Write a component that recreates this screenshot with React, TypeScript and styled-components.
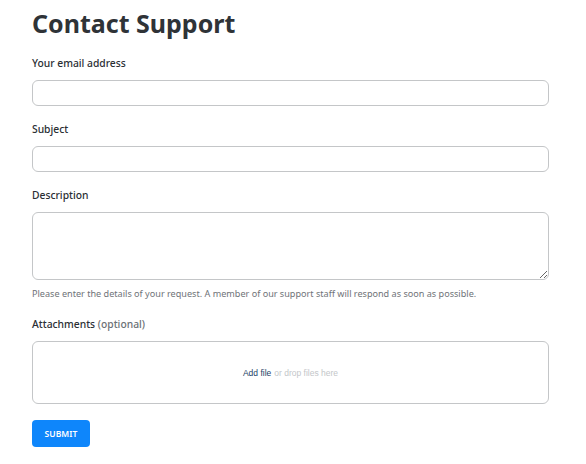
import React from "react";
import styled, { createGlobalStyle } from "styled-components";

const GlobalStyle = createGlobalStyle`
  html, body {
    margin: 0;
    padding: 0;
    background: #ffffff;
  }
  body {
    font-family: "Noto Sans", "Open Sans", sans-serif;
    color: #2f3337;
  }
`;

const Page = styled.main`
  padding: 5px 37px 0 32px;
  display: flex;
  flex-direction: column;
`;

const Title = styled.h1`
  margin: 0 0 14px;
  font-size: 25px;
  line-height: 36px;
  font-weight: 700;
  color: #2f3337;
`;

const Field = styled.div`
  display: flex;
  flex-direction: column;
  margin-bottom: ${(p: { gap?: number }) => (p.gap ?? 15)}px;
`;

const Label = styled.label`
  font-size: 10.3px;
  line-height: 16px;
  font-weight: 500;
  color: #2a2e33;
  margin-bottom: 9px;
`;

const Muted = styled.span`
  color: #6b7075;
`;

const Input = styled.input`
  box-sizing: border-box;
  height: 26px;
  width: 100%;
  border: 1px solid #c4c6c8;
  border-radius: 6px;
  background: #fff;
  padding: 0 8px;
  font: inherit;
  outline: none;
`;

const TextArea = styled.textarea`
  box-sizing: border-box;
  height: 68px;
  width: 100%;
  border: 1px solid #c4c6c8;
  border-radius: 6px;
  background: #fff;
  padding: 6px 8px;
  font: inherit;
  resize: vertical;
  outline: none;
  display: block;
`;

const Hint = styled.p`
  margin: 8px 0 0;
  font-size: 9.1px;
  line-height: 12px;
  color: #6f7378;
`;

const DropZone = styled.div`
  box-sizing: border-box;
  height: 63px;
  border: 1px solid #c4c6c8;
  border-radius: 6px;
  display: flex;
  align-items: center;
  justify-content: center;
  font-family: "Liberation Sans", Arial, sans-serif;
  font-size: 8.5px;
  gap: 3px;
`;

const AddFile = styled.a`
  color: #1d3f66;
  text-decoration: none;
`;

const DropText = styled.span`
  color: #c3c6c9;
`;

const Submit = styled.button`
  align-self: flex-start;
  width: 58px;
  height: 27px;
  border: none;
  border-radius: 4px;
  background: #0e86fb;
  color: #fff;
  font-family: "Noto Sans", sans-serif;
  font-size: 8.5px;
  font-weight: 600;
  letter-spacing: 0.1px;
  cursor: pointer;
`;

export default function App() {
  return (
    <>
      <GlobalStyle />
      <Page>
        <Title>Contact Support</Title>
        <Field>
          <Label>Your email address</Label>
          <Input type="email" />
        </Field>
        <Field>
          <Label>Subject</Label>
          <Input type="text" />
        </Field>
        <Field gap={16}>
          <Label>Description</Label>
          <TextArea />
          <Hint>
            Please enter the details of your request. A member of our support
            staff will respond as soon as possible.
          </Hint>
        </Field>
        <Field gap={16}>
          <Label>
            Attachments <Muted>(optional)</Muted>
          </Label>
          <DropZone>
            <AddFile href="#">Add file</AddFile>
            <DropText>or drop files here</DropText>
          </DropZone>
        </Field>
        <Submit>SUBMIT</Submit>
      </Page>
    </>
  );
}
